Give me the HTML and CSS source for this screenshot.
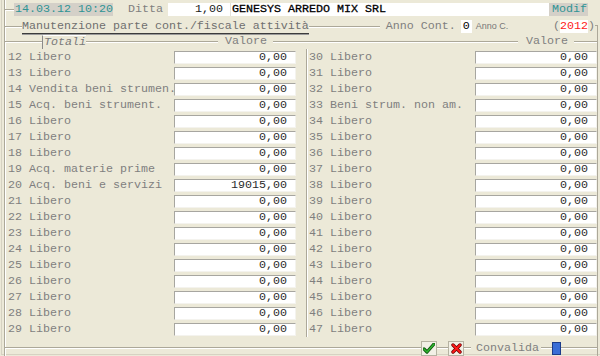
FILE: index.html
```html
<!DOCTYPE html>
<html lang="it">
<head>
<meta charset="utf-8">
<title>Manutenzione parte cont./fiscale attività</title>
<link rel="stylesheet" href="styles.css">
</head>
<body>
<div class="win">
  <div class="frame">
    <div class="row-top">
      <span class="ln tick9"></span>
      <span class="stamp">14.03.12 10:20</span>
      <span class="lbl ditta">Ditta</span>
      <span class="field code">1,00</span>
      <span class="field name">GENESYS ARREDO MIX SRL</span>
      <span class="stamp modif">Modif</span>
    </div>
    <div class="row-title">
      <span class="ln tick17"></span>
      <span class="legend">Manutenzione parte cont./fiscale attività</span>
      <span class="ln l71"></span>
      <span class="lbl anno">Anno Cont.</span>
      <span class="field mini">0</span>
      <span class="tiny">Anno C.</span>
      <span class="spacer"></span>
      <span class="lbl">(</span><span class="year">2012</span><span class="lbl">)</span>
      <span class="tail"></span>
    </div>
    <div class="group">
      <div class="row-head">
        <span class="ln tick37"></span>
        <span class="tab">Totali</span>
        <span class="ln l132"></span>
        <span class="lbl hval">Valore</span>
        <span class="ln l245"></span>
        <span class="lbl hval2">Valore</span>
        <span class="ln grow"></span>
      </div>
      <div class="cols">
        <div class="col left">
          <div class="row"><span class="lbl name-c">12 Libero</span><span class="box">0,00</span></div>
          <div class="row"><span class="lbl name-c">13 Libero</span><span class="box">0,00</span></div>
          <div class="row"><span class="lbl name-c">14 Vendita beni strumen.</span><span class="box">0,00</span></div>
          <div class="row"><span class="lbl name-c">15 Acq. beni strument.</span><span class="box">0,00</span></div>
          <div class="row"><span class="lbl name-c">16 Libero</span><span class="box">0,00</span></div>
          <div class="row"><span class="lbl name-c">17 Libero</span><span class="box">0,00</span></div>
          <div class="row"><span class="lbl name-c">18 Libero</span><span class="box">0,00</span></div>
          <div class="row"><span class="lbl name-c">19 Acq. materie prime</span><span class="box">0,00</span></div>
          <div class="row"><span class="lbl name-c">20 Acq. beni e servizi</span><span class="box">19015,00</span></div>
          <div class="row"><span class="lbl name-c">21 Libero</span><span class="box">0,00</span></div>
          <div class="row"><span class="lbl name-c">22 Libero</span><span class="box">0,00</span></div>
          <div class="row"><span class="lbl name-c">23 Libero</span><span class="box">0,00</span></div>
          <div class="row"><span class="lbl name-c">24 Libero</span><span class="box">0,00</span></div>
          <div class="row"><span class="lbl name-c">25 Libero</span><span class="box">0,00</span></div>
          <div class="row"><span class="lbl name-c">26 Libero</span><span class="box">0,00</span></div>
          <div class="row"><span class="lbl name-c">27 Libero</span><span class="box">0,00</span></div>
          <div class="row"><span class="lbl name-c">28 Libero</span><span class="box">0,00</span></div>
          <div class="row"><span class="lbl name-c">29 Libero</span><span class="box">0,00</span></div>
        </div>
        <div class="col right">
          <div class="row"><span class="lbl name-c">30 Libero</span><span class="box">0,00</span></div>
          <div class="row"><span class="lbl name-c">31 Libero</span><span class="box">0,00</span></div>
          <div class="row"><span class="lbl name-c">32 Libero</span><span class="box">0,00</span></div>
          <div class="row"><span class="lbl name-c">33 Beni strum. non am.</span><span class="box">0,00</span></div>
          <div class="row"><span class="lbl name-c">34 Libero</span><span class="box">0,00</span></div>
          <div class="row"><span class="lbl name-c">35 Libero</span><span class="box">0,00</span></div>
          <div class="row"><span class="lbl name-c">36 Libero</span><span class="box">0,00</span></div>
          <div class="row"><span class="lbl name-c">37 Libero</span><span class="box">0,00</span></div>
          <div class="row"><span class="lbl name-c">38 Libero</span><span class="box">0,00</span></div>
          <div class="row"><span class="lbl name-c">39 Libero</span><span class="box">0,00</span></div>
          <div class="row"><span class="lbl name-c">40 Libero</span><span class="box">0,00</span></div>
          <div class="row"><span class="lbl name-c">41 Libero</span><span class="box">0,00</span></div>
          <div class="row"><span class="lbl name-c">42 Libero</span><span class="box">0,00</span></div>
          <div class="row"><span class="lbl name-c">43 Libero</span><span class="box">0,00</span></div>
          <div class="row"><span class="lbl name-c">44 Libero</span><span class="box">0,00</span></div>
          <div class="row"><span class="lbl name-c">45 Libero</span><span class="box">0,00</span></div>
          <div class="row"><span class="lbl name-c">46 Libero</span><span class="box">0,00</span></div>
          <div class="row"><span class="lbl name-c">47 Libero</span><span class="box">0,00</span></div>
        </div>
      </div>
      <div class="row-bottom">
        <span class="ln l416"></span>
        <span class="btn" title="Conferma"><svg width="12" height="11" viewBox="0 0 12 11"><path d="M1 6 L4 9 L11 1" fill="none" stroke="#0b4f0b" stroke-width="3.2" stroke-linecap="round" stroke-linejoin="round"/><path d="M1 6 L4 9 L11 1" fill="none" stroke="#2fb52f" stroke-width="1.6" stroke-linecap="round" stroke-linejoin="round"/></svg></span>
        <span class="ln l11"></span>
        <span class="btn" title="Annulla"><svg width="11" height="11" viewBox="0 0 11 11"><path d="M2 2 L9 9 M9 2 L2 9" fill="none" stroke="#6a0000" stroke-width="3.4" stroke-linecap="round"/><path d="M2 2 L9 9 M9 2 L2 9" fill="none" stroke="#ff1a1a" stroke-width="1.8" stroke-linecap="round"/></svg></span>
        <span class="ln l7"></span>
        <span class="lbl conv">Convalida</span>
        <span class="ln l11"></span>
        <span class="flag"></span>
        <span class="ln grow"></span>
      </div>
    </div>
  </div>
</div>
</body>
</html>
```
FILE: styles.css
```css
html, body {
  margin: 0;
  padding: 0;
  background: #ece9d8;
}
body {
  width: 600px;
  height: 356px;
  overflow: hidden;
  font-family: "Liberation Mono", "DejaVu Sans Mono", monospace;
  font-size: 11.667px;
  line-height: 13px;
  color: #7f7f7f;
}
.win {
  margin-left: 1px;
  padding-left: 2px;
  border-left: 1px solid #d6d2c2;
  height: 354px;
  border-bottom: 1px solid #d6d2c2;
}
.frame {
  width: 593px;
  border-left: 1px solid #aca899;
  box-shadow: inset 1px 0 #ffffff;
}
.ln {
  display: block;
  height: 0;
  border-top: 1px solid #aca899;
  border-bottom: 1px solid #ffffff;
  flex: none;
}
.grow { flex: 1; }
.tick9 { width: 9px; }
.tick17 { width: 17px; }
.tick37 { width: 37px; }
.l71 { width: 71px; }
.l132 { width: 132px; }
.l245 { width: 245px; }
.l416 { width: 416px; }
.l11 { width: 11px; }
.l7 { width: 7px; }

.lbl { white-space: pre; flex: none; }

/* top row */
.row-top {
  display: flex;
  align-items: center;
  height: 19px;
}
.stamp {
  height: 13px;
  background: #d4d0c8;
  color: #2f9494;
  padding-left: 1px;
  width: 99px;
  box-sizing: border-box;
}
.modif {
  width: 39px;
  padding-left: 3px;
}
.ditta { margin-left: 15px; width: 35px; }
.field {
  height: 13px;
  background: #ffffff;
  color: #1a1a1a;
  box-sizing: border-box;
  white-space: pre;
}
.code {
  margin-left: 5px;
  width: 63px;
  text-align: right;
  padding-right: 7px;
  border-right: 1px solid #e4e2da;
}
.name {
  width: 318px;
  padding-left: 1px;
  color: #000;
  -webkit-text-stroke: 0.3px #000;
}

/* title row */
.row-title {
  display: flex;
  align-items: center;
  height: 15px;
}
.legend {
  white-space: pre;
  height: 13px;
  color: #6f6f6f;
  border-bottom: 1px solid #3c3c3c;
  box-shadow: 0 1px #9a9a9a;
  align-self: flex-start;
  margin-top: 1px;
}
.anno { margin-left: 6px; width: 70px; }
.mini {
  margin-left: 5px;
  width: 11px;
  padding-left: 2px;
  color: #000;
}
.tiny {
  margin-left: 4px;
  font-family: "Liberation Sans", Arial, sans-serif;
  font-size: 9px;
  color: #777;
}
.spacer { flex: 1; }
.year {
  background: #fff;
  color: #ff2020;
  height: 13px;
}
.tail {
  align-self: flex-end;
  width: 2px;
  height: 8px;
  border-top: 1px solid #aca899;
  border-right: 1px solid #aca899;
  flex: none;
}

/* group */
.group {
  border-right: 1px solid #aca899;
}
.row-head {
  display: flex;
  align-items: center;
  height: 15px;
}
.tab {
  height: 14px;
  box-sizing: border-box;
  width: 44px;
  padding-left: 1px;
  border-left: 1px solid #8a8a8a;
  border-top: 1px solid #ffffff;
  font-style: italic;
  color: #7a7a7a;
  flex: none;
}
.hval { margin-left: 7px; margin-right: 6px; width: 42px; }
.hval2 { margin-left: 8px; margin-right: 6px; width: 42px; }

.cols {
  display: grid;
  grid-template-columns: 301px 1fr;
  padding-bottom: 11px;
}
.col.left { padding-left: 3px; }
.col.right {
  border-left: 1px solid #aca899;
  box-shadow: inset 1px 0 #ffffff;
  padding-left: 2px;
}
.row {
  display: flex;
  align-items: center;
  height: 16px;
}
.name-c { width: 166px; overflow: visible; }
.box {
  width: 122px;
  height: 13px;
  box-sizing: border-box;
  background: #fff;
  border-top: 1px solid #a7a6a0;
  border-left: 1px solid #a7a6a0;
  border-right: 1px solid #f4f3ee;
  border-bottom: 1px solid #f4f3ee;
  text-align: right;
  padding-right: 8px;
  line-height: 11px;
  color: #2a2a2a;
  white-space: pre;
}

/* bottom */
.row-bottom {
  display: flex;
  align-items: center;
  height: 16px;
  margin-top: -8px;
  margin-bottom: -8px;
}
.btn {
  width: 16px;
  height: 15px;
  box-sizing: border-box;
  border: 1px solid #b6b3a2;
  background: #f2f0e6;
  display: flex;
  align-items: center;
  justify-content: center;
  flex: none;
}
.conv { margin-left: 5px; margin-right: 2px; width: 63px; }
.flag {
  width: 9px;
  height: 13px;
  box-sizing: border-box;
  background: #3a6ed6;
  border: 1px solid #1c3c8a;
  flex: none;
}
```
